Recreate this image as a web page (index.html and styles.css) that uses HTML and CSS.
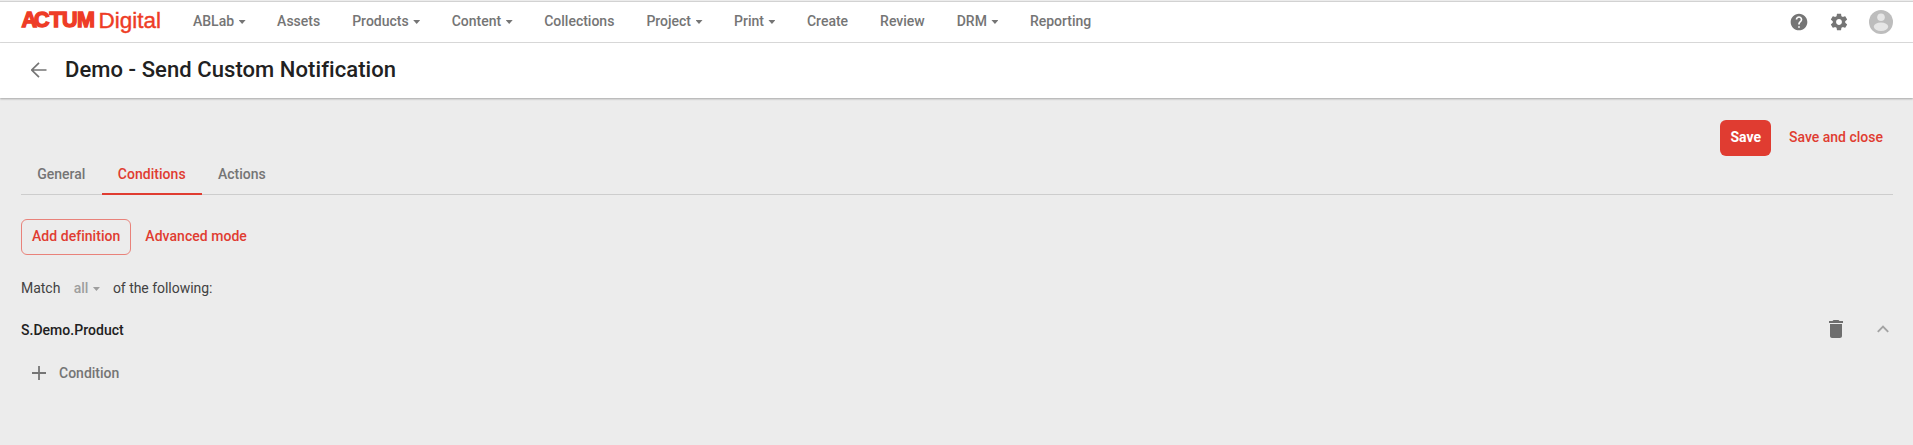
FILE: index.html
```html
<!DOCTYPE html>
<html lang="en">
<head>
<meta charset="utf-8">
<title>Demo - Send Custom Notification</title>
<link rel="stylesheet" href="styles.css">
</head>
<body>
<header class="topbar">
  <svg class="logo" width="144" height="28" viewBox="0 0 144 28" role="img" aria-label="ACTUM Digital">
    <text class="logo-bold" y="19.300"><tspan x="1.500">A</tspan><tspan x="14">C</tspan><tspan x="29.500">T</tspan><tspan x="42">U</tspan><tspan x="57">M</tspan></text>
    <text class="logo-light" x="78.500" y="19.500" textLength="62.500" lengthAdjust="spacingAndGlyphs">Digital</text>
  </svg>
  <nav class="nav">
    <a class="nav-item">ABLab<i class="caret"></i></a>
    <a class="nav-item">Assets</a>
    <a class="nav-item">Products<i class="caret"></i></a>
    <a class="nav-item">Content<i class="caret"></i></a>
    <a class="nav-item">Collections</a>
    <a class="nav-item">Project<i class="caret"></i></a>
    <a class="nav-item">Print<i class="caret"></i></a>
    <a class="nav-item">Create</a>
    <a class="nav-item">Review</a>
    <a class="nav-item">DRM<i class="caret"></i></a>
    <a class="nav-item">Reporting</a>
  </nav>
  <div class="tools">
    <svg width="20" height="20" viewBox="0 0 24 24"><path d="M12 2C6.48 2 2 6.48 2 12s4.480 10 10 10 10-4.480 10-10S17.520 2 12 2zm1 17h-2v-2h2v2zm2.070-7.750l-.9.920C13.450 12.900 13 13.500 13 15h-2v-.5c0-1.100.450-2.100 1.170-2.830l1.240-1.260c.370-.360.590-.860.590-1.410 0-1.100-.9-2-2-2s-2 .9-2 2H8c0-2.210 1.790-4 4-4s4 1.790 4 4c0 .880-.360 1.680-.930 2.250z"/></svg>
    <svg width="20" height="20" viewBox="0 0 24 24"><path d="M19.430 12.980c.040-.320.070-.640.070-.980s-.030-.660-.070-.980l2.110-1.650c.190-.150.240-.420.120-.640l-2-3.460c-.120-.220-.390-.3-.610-.220l-2.490 1c-.520-.4-1.080-.730-1.690-.980l-.380-2.650C14.460 2.180 14.250 2 14 2h-4c-.250 0-.460.180-.490.420l-.380 2.650c-.610.250-1.170.590-1.690.980l-2.490-1c-.230-.090-.490 0-.610.220l-2 3.460c-.130.220-.070.490.120.640l2.110 1.650c-.040.320-.070.650-.070.980s.030.660.070.980l-2.110 1.650c-.190.150-.240.420-.120.640l2 3.460c.120.220.390.3.610.220l2.490-1c.520.4 1.080.730 1.690.980l.380 2.650c.030.240.240.420.490.420h4c.250 0 .460-.180.490-.420l.380-2.650c.610-.250 1.170-.590 1.690-.980l2.490 1c.230.090.490 0 .610-.220l2-3.460c.120-.220.070-.490-.120-.640l-2.110-1.650zM12 15.500c-1.930 0-3.500-1.570-3.500-3.500s1.570-3.500 3.500-3.500 3.500 1.570 3.500 3.500-1.570 3.500-3.500 3.500z"/></svg>
    <svg width="24" height="24" viewBox="0 0 24 24"><circle cx="12" cy="12" r="12" fill="#bdbdbd"/><circle cx="12" cy="7.300" r="3.800" fill="#e6e6e6"/><ellipse cx="12" cy="16.700" rx="7.200" ry="4.200" fill="#e6e6e6"/></svg>
  </div>
</header>
<div class="titlebar">
  <svg width="16" height="16" viewBox="0 0 16 16"><path d="M15.500 8H1M8 .8L.8 8 8 15.200" fill="none" stroke="#757575" stroke-width="1.700"/></svg>
  <h1 class="title">Demo - Send Custom Notification</h1>
</div>
<main class="content">
  <div class="actions">
    <button class="btn btn-solid">Save</button>
    <button class="btn">Save and close</button>
  </div>
  <div class="tabs">
    <a class="tab">General</a>
    <a class="tab tab-active">Conditions</a>
    <a class="tab">Actions</a>
  </div>
  <div class="modes">
    <button class="btn btn-outline">Add definition</button>
    <button class="btn">Advanced mode</button>
  </div>
  <div class="match">
    <span>Match</span><span class="match-select">all<i class="caret"></i></span><span>of the following:</span>
  </div>
  <div class="definition">
    <span class="definition-name">S.Demo.Product</span>
    <svg class="trash" width="14" height="18" viewBox="0 0 14 18"><path d="M1 16c0 1.100.9 2 2 2h8c1.100 0 2-.9 2-2V4H1v12zM14 1h-3.500l-1-1h-5l-1 1H0v2h14V1z"/></svg>
    <svg class="chevron" width="12" height="8" viewBox="0 0 12 8"><path d="M.8 6.800L6 1.600l5.200 5.200" fill="none" stroke="#a3a3a3" stroke-width="1.900"/></svg>
  </div>
  <div class="add">
    <svg width="14" height="14" viewBox="0 0 14 14"><path d="M7 0v14M0 7h14" stroke="#757575" stroke-width="1.800"/></svg>
    <span>Condition</span>
  </div>
</main>
</body>
</html>
```
FILE: styles.css
```css
* { box-sizing: border-box; }
body {
  margin: 0;
  height: 445px;
  overflow: hidden;
  background: #ececec;
  color: #757575;
  font: 500 14px/20px Roboto, sans-serif;
}
svg { display: block; flex: none; }
.topbar {
  display: flex;
  align-items: center;
  height: 42px;
  margin-top: 1px;
  padding: 0 15px 0 20px;
  background: #fff;
  border-top: 1px solid #d2d2d2;
  border-bottom: 1px solid #dcdcdc;
}
.logo { overflow: visible; fill: #ee3c26; font-family: "Liberation Sans", sans-serif; }
.logo-bold { font-size: 21.500px; font-weight: 700; stroke: #ee3c26; stroke-width: 1.400; }
.logo-light { font-size: 22.500px; font-weight: 400; stroke: #ee3c26; stroke-width: .4; }
.nav { display: flex; gap: 32px; margin-left: 29px; padding-bottom: 2px; }
.nav-item { display: flex; align-items: center; }
.caret {
  margin: 2px -.5px 0 4.500px;
  border: 3.500px solid transparent;
  border-width: 3px 3.500px 0;
  border-top-color: currentColor;
}
.nav-item .caret, .match .caret {
  width: 7px;
  height: 4px;
  border: 0;
  background: currentColor;
  clip-path: polygon(0 0, 100% 0, 50% 100%);
}
.tools {
  display: flex;
  align-items: center;
  gap: 20px;
  margin-left: auto;
  padding-right: 5px;
  fill: #757575;
}
.titlebar {
  display: flex;
  align-items: center;
  gap: 18px;
  height: 55px;
  padding: 0 31px 1px;
  background: #fff;
  box-shadow: 0 1px 2px rgba(0, 0, 0, .3);
}
.title {
  margin: 0;
  padding-bottom: 1px;
  color: #212121;
  font-size: 22px;
  font-weight: 500;
  line-height: 28px;
  letter-spacing: .07px;
}
.content { padding: 22px 20px 0 21px; }
.actions { display: flex; justify-content: flex-end; gap: 8px; }
.btn {
  height: 36px;
  padding: 0 10px 2px;
  border: 0;
  border-radius: 6px;
  background: none;
  color: #e03c31;
  font: inherit;
}
.btn-solid { background: #e03c31; color: #fff; font-weight: 700; }
.btn-outline { border: 1px solid #e9827a; }
.tabs { display: flex; height: 39px; border-bottom: 1px solid #cdcdcd; }
.tab { height: 39px; padding: 8px 16.200px 0 16.200px; }
.tab-active { border-bottom: 2px solid #e03c31; color: #e03c31; letter-spacing: .04px; }
.modes { display: flex; gap: 4px; margin-top: 24px; }
.modes .btn { letter-spacing: .04px; }
.match { display: flex; margin-top: 23px; color: #424242; font-weight: 400; letter-spacing: -.03px; }
.match-select { display: flex; align-items: center; margin: 0 13.500px; color: #9e9e9e; font-weight: 500; }
.definition { display: flex; align-items: center; margin-top: 22px; padding-right: 4px; color: #212121; letter-spacing: .03px; }
.trash { margin: 0 34px 2px auto; fill: #6e6e6e; }
.chevron { margin-bottom: 2px; }
.add { display: flex; align-items: center; gap: 13px; margin: 23px 0 0 11px; }
```
